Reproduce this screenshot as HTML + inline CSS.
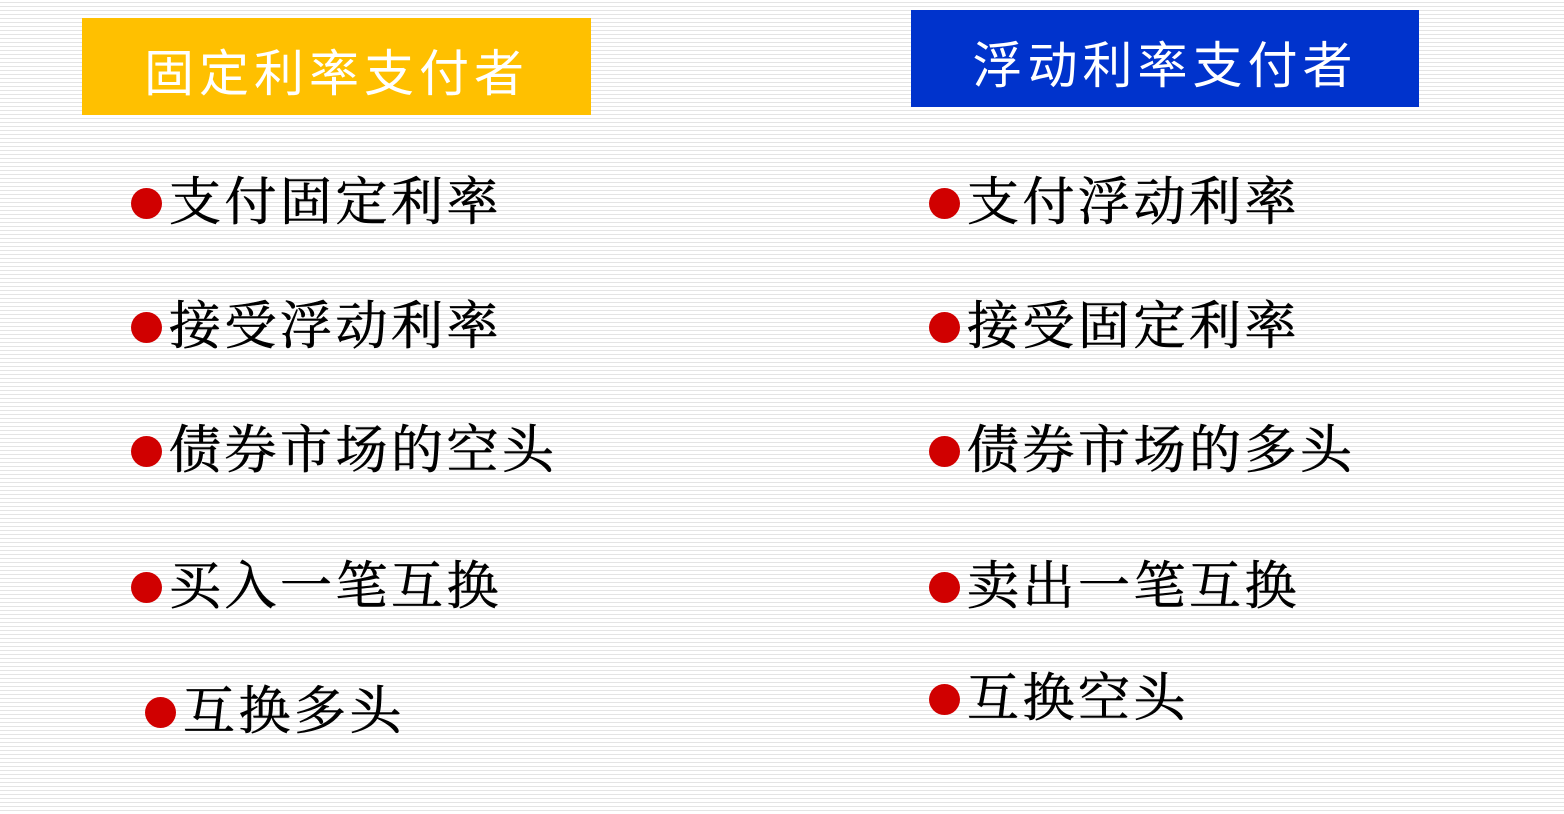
<!DOCTYPE html>
<html><head><meta charset="utf-8"><style>
body{margin:0;width:1564px;height:814px;overflow:hidden;position:relative;
background:repeating-linear-gradient(to bottom,#fff 0px,#fff 2px,#e4e4e4 2px,#e4e4e4 3px,#fff 3px,#fff 4px);
font-family:"Liberation Serif","Noto Serif CJK SC",serif;}
.h{position:absolute;color:#fff;font-size:50px;letter-spacing:5px;line-height:112px;text-align:center;font-family:"Liberation Sans","Noto Sans CJK SC",sans-serif;overflow:hidden;}
.i{position:absolute;font-size:52px;letter-spacing:3.5px;line-height:64px;color:#000;white-space:nowrap;-webkit-text-stroke:0.6px #000;}
.i b{display:inline-block;width:31px;height:31px;border-radius:50%;background:#d00000;margin-right:7px;vertical-align:middle;position:relative;top:-5px;}
</style></head><body>
<div class="h" style="left:82px;top:18px;width:509px;height:97px;background:#ffc000;">固定利率支付者</div>
<div class="h" style="left:911px;top:10px;width:508px;height:97px;background:#0033cc;">浮动利率支付者</div>
<div class="i" style="left:131px;top:172px"><b></b>支付固定利率</div>
<div class="i" style="left:131px;top:296px"><b></b>接受浮动利率</div>
<div class="i" style="left:131px;top:420px"><b></b>债券市场的空头</div>
<div class="i" style="left:131px;top:556px"><b></b>买入一笔互换</div>
<div class="i" style="left:145px;top:681px"><b></b>互换多头</div>
<div class="i" style="left:929px;top:172px"><b></b>支付浮动利率</div>
<div class="i" style="left:929px;top:296px"><b></b>接受固定利率</div>
<div class="i" style="left:929px;top:420px"><b></b>债券市场的多头</div>
<div class="i" style="left:929px;top:556px"><b></b>卖出一笔互换</div>
<div class="i" style="left:929px;top:668px"><b></b>互换空头</div>
</body></html>
